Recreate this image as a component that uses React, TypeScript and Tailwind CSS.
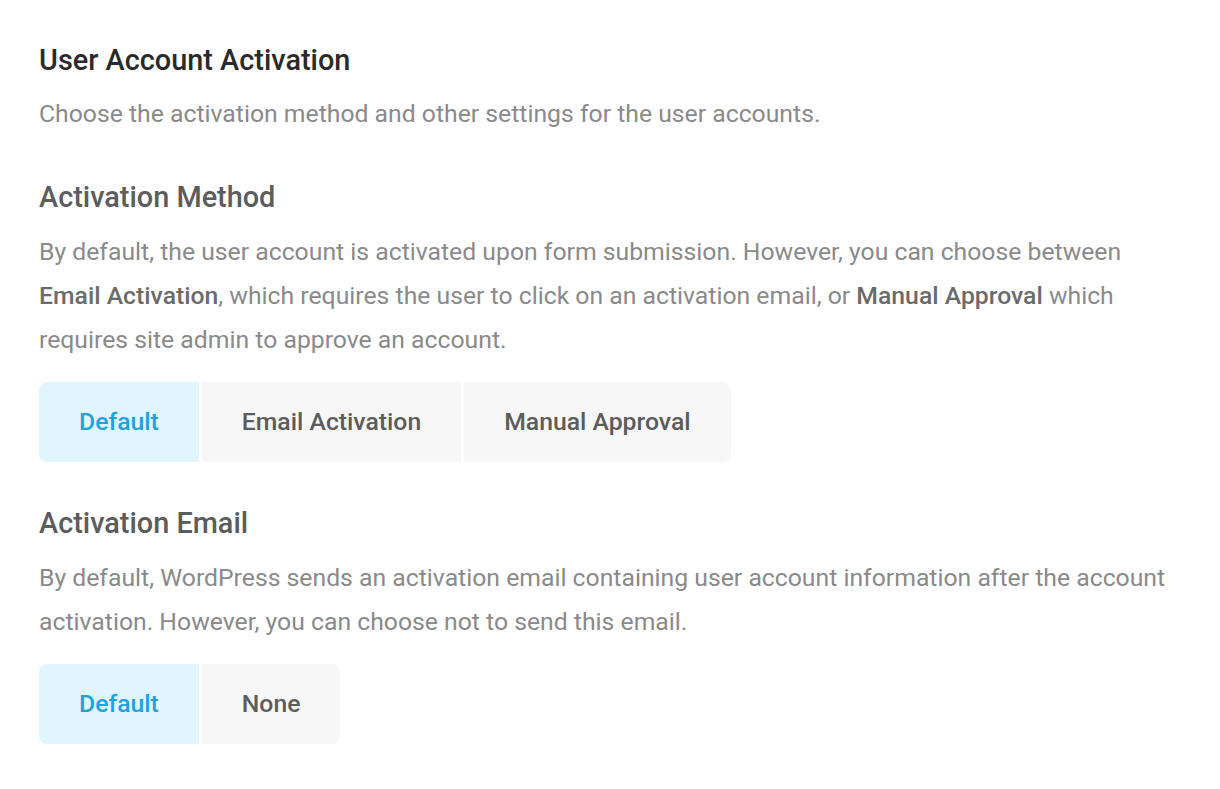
const font = { fontFamily: "Roboto, 'Noto Sans', sans-serif" };

function Segmented({ options, active }: { options: string[]; active: string }) {
  return (
    <div className="flex gap-[3px]">
      {options.map((o, i) => (
        <button
          key={o}
          className={[
            "h-20 px-10 text-[24.75px] font-medium",
            o === active ? "bg-[#e1f5fe] text-[#1ea2e0]" : "bg-[#f7f7f7] text-[#5c5c5c]",
            i === 0 ? "rounded-l-lg" : "",
            i === options.length - 1 ? "rounded-r-lg" : "",
          ].join(" ")}
        >
          {o}
        </button>
      ))}
    </div>
  );
}

export default function App() {
  return (
    <div className="min-h-screen bg-white pl-[39px] pr-[41px] pt-[42px]" style={font}>
      <h1 className="text-[28.875px] font-medium leading-9 text-[#2a2a2a]">User Account Activation</h1>
      <p className="mt-[18px] text-[24.75px] leading-9 text-[#8a8a8a]">
        Choose the activation method and other settings for the user accounts.
      </p>

      <h2 className="mt-[47px] text-[28.875px] font-medium leading-9 text-[#5c5c5c]">Activation Method</h2>
      <p className="mt-[15px] text-[24.75px] leading-[44px] text-[#8a8a8a]">
        By default, the user account is activated upon form submission. However, you can choose between{" "}
        <b className="font-medium text-[#6b6b6b]">Email Activation</b>, which requires the user to click on an activation
        email, or <b className="font-medium text-[#6b6b6b]">Manual Approval</b> which requires site admin to approve an
        account.
      </p>
      <div className="mt-[20px]">
        <Segmented options={["Default", "Email Activation", "Manual Approval"]} active="Default" />
      </div>

      <h2 className="mt-[43px] text-[28.875px] font-medium leading-9 text-[#5c5c5c]">Activation Email</h2>
      <p className="mt-[15px] text-[24.75px] leading-[44px] text-[#8a8a8a]">
        By default, WordPress sends an activation email containing user account information after the account
        activation. However, you can choose not to send this email.
      </p>
      <div className="mt-[20px]">
        <Segmented options={["Default", "None"]} active="Default" />
      </div>
    </div>
  );
}
